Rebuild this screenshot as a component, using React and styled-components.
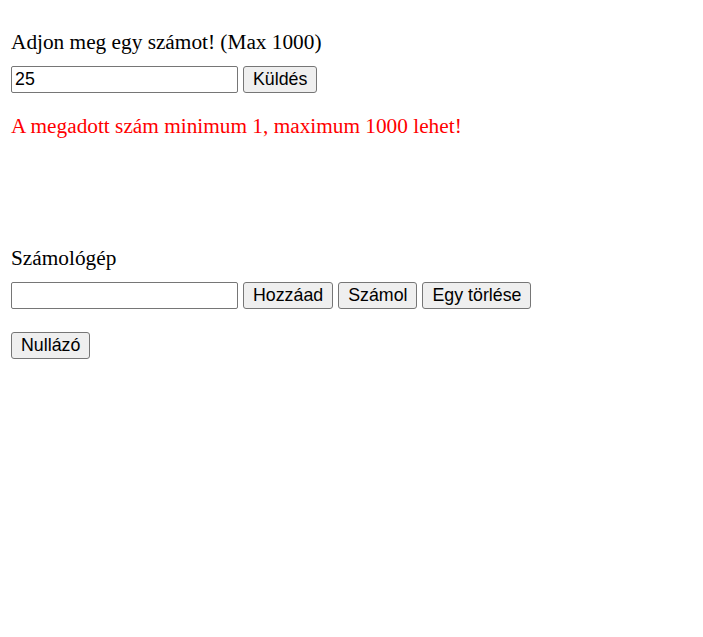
import styled, { createGlobalStyle } from "styled-components";

const GlobalStyle = createGlobalStyle`
  body {
    margin: 0;
    background: #fff;
    font-family: "Liberation Serif", "Times New Roman", serif;
  }
`;

const Page = styled.div`
  padding: 0 10px 0 11px;
`;

const Section = styled.section`
  display: flex;
  flex-direction: column;
  align-items: flex-start;
`;

const Heading = styled.p`
  margin: ${(p) => p.$top}px 0 0;
  font-size: 21.3px;
  line-height: 24px;
  color: ${(p) => (p.$error ? "#ff0000" : "#000")};
`;

const Row = styled.div`
  display: flex;
  align-items: center;
  gap: 5px;
  margin-top: ${(p) => p.$top}px;
`;

const Input = styled.input`
  box-sizing: border-box;
  width: 227px;
  height: 27px;
  margin: 0;
  padding: 1px 3px;
  border: 1px solid #767676;
  border-radius: 2px;
  font-family: "Liberation Sans", Arial, sans-serif;
  font-size: 17.8px;
  color: #000;
  background: #fff;
`;

const Button = styled.button`
  box-sizing: border-box;
  height: 27px;
  margin: 0;
  padding: 1px 9px;
  border: 1px solid #767676;
  border-radius: 3px;
  background: #efefef;
  font-family: "Liberation Sans", Arial, sans-serif;
  font-size: 17.8px;
  color: #000;
`;

export default function App() {
  return (
    <Page>
      <GlobalStyle />
      <Section>
        <Heading $top={30}>Adjon meg egy számot! (Max 1000)</Heading>
        <Row $top={12}>
          <Input defaultValue="25" />
          <Button>Küldés</Button>
        </Row>
        <Heading $top={21} $error>
          A megadott szám minimum 1, maximum 1000 lehet!
        </Heading>
      </Section>
      <Section>
        <Heading $top={108}>Számológép</Heading>
        <Row $top={12}>
          <Input />
          <Button>Hozzáad</Button>
          <Button>Számol</Button>
          <Button>Egy törlése</Button>
        </Row>
        <Row $top={23}>
          <Button>Nullázó</Button>
        </Row>
      </Section>
    </Page>
  );
}
